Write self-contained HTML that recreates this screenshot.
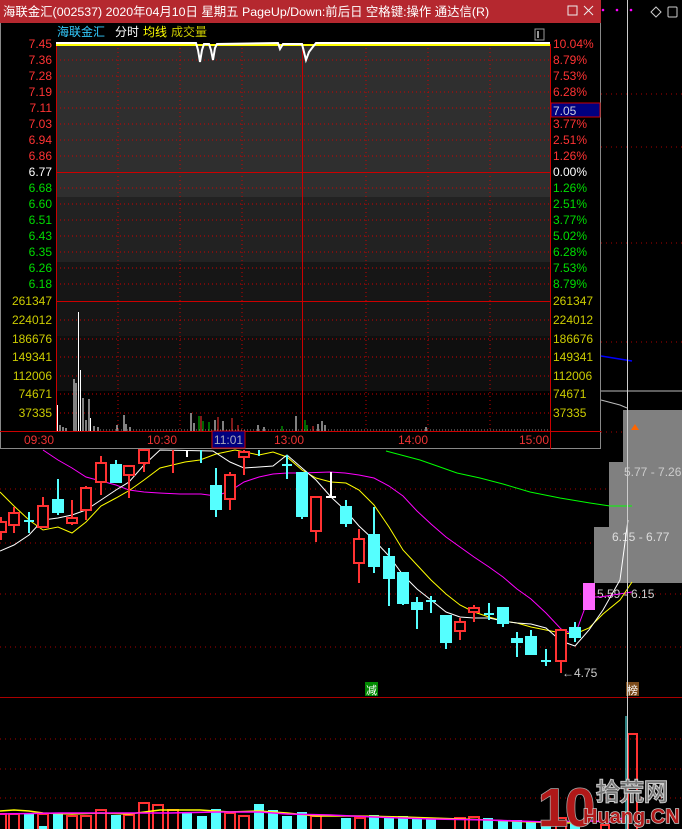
<!DOCTYPE html>
<html><head><meta charset="utf-8"><style>
html,body{margin:0;padding:0;background:#000;width:682px;height:829px;overflow:hidden}
svg{display:block}
text{font-family:"Liberation Sans","Noto Sans CJK SC",sans-serif;font-size:12px}
</style></head><body>
<svg width="682" height="829" viewBox="0 0 682 829" xmlns="http://www.w3.org/2000/svg">
<rect width="682" height="829" fill="#000"/>
<g stroke="#a00" stroke-width="1" stroke-dasharray="1,4">
<line x1="0" y1="489" x2="682" y2="489"/><line x1="0" y1="543" x2="682" y2="543"/>
<line x1="0" y1="594" x2="682" y2="594"/><line x1="0" y1="647" x2="682" y2="647"/>
<line x1="601" y1="94" x2="682" y2="94"/><line x1="601" y1="147" x2="682" y2="147"/>
<line x1="601" y1="243" x2="682" y2="243"/><line x1="601" y1="342" x2="682" y2="342"/>
<line x1="601" y1="432" x2="682" y2="432"/>
<line x1="0" y1="739" x2="682" y2="739"/><line x1="0" y1="769" x2="682" y2="769"/><line x1="0" y1="798" x2="682" y2="798"/>
</g>
<line x1="0" y1="697.5" x2="682" y2="697.5" stroke="#a00"/>
<rect x="623" y="410" width="59" height="52" fill="#808080"/>
<rect x="609" y="462" width="73" height="65" fill="#808080"/>
<rect x="594" y="527" width="88" height="56" fill="#808080"/>
<line x1="601" y1="391" x2="682" y2="391" stroke="#bbb"/>
<polyline points="601,400 620,405 627,408" fill="none" stroke="#bbb"/>
<polyline points="601,356 632,361" fill="none" stroke="#00f" stroke-width="1.5"/>
<path d="M631,430 L635,424 L639,430 Z" fill="#f60"/>
<text x="624" y="476" fill="#ccc">5.77 - 7.26</text>
<text x="612" y="541" fill="#ddd">6.15 - 6.77</text>
<text x="597" y="598" fill="#ccc">5.59 - 6.15</text>
<polyline fill="none" stroke="#0f0" stroke-width="1" points="386,451 420,460 440,467 457,473 480,478 503,484 530,492 560,498 590,503 610,506 632,506"/>
<polyline fill="none" stroke="#f0f" stroke-width="1" points="43,450 58,460 72,468 86,477 101,481 116,485 129,490 144,492 159,493 180,494 201,494 216,496 230,491 244,482 259,477 273,474 287,473 302,473 330,472 345,473 359,475 374,478 389,486 403,496 417,511 431,524 446,537 460,547 474,557 489,567 503,577 517,589 531,599 546,613 561,629 575,635 589,597 600,597 632,592"/>
<polyline fill="none" stroke="#ff0" stroke-width="1" points="0,492 14,506 29,520 43,530 58,527 72,533 86,522 101,506 116,498 130,490 144,480 160,468 185,462 200,460 216,454 235,450 259,455 273,452 287,457 302,470 316,478 331,482 346,483 359,490 374,505 389,527 403,550 417,565 431,580 446,594 460,605 474,612 489,617 503,621 517,623 531,627 546,630 561,633 575,634 589,628 603,614 620,600 632,582"/>
<polyline fill="none" stroke="#fff" stroke-width="1" points="0,551 14,545 29,535 43,520 58,518 72,515 86,510 101,500 116,490 129,482 144,465 160,450 213,451 230,462 244,468 259,467 273,466 287,455 302,468 316,480 331,497 346,511 359,526 374,540 389,556 403,575 417,589 431,600 446,612 460,617 474,618 489,618 503,621 517,623 531,624 546,628 561,641 575,646 589,630 603,610 620,580 628,520"/>
<g stroke-width="2">
<g stroke="#ff3232" fill="#000">
<line x1="1" y1="517" x2="1" y2="540"/><rect x="-4" y="522" width="10" height="10"/>
<line x1="14" y1="507" x2="14" y2="533"/><rect x="9" y="513" width="10" height="12"/>
<line x1="43" y1="497" x2="43" y2="527"/><rect x="38" y="506" width="10" height="21"/>
<line x1="72" y1="500" x2="72" y2="525"/><rect x="67" y="518" width="10" height="5"/>
<line x1="86" y1="486" x2="86" y2="520"/><rect x="81" y="488" width="10" height="22"/>
<line x1="101" y1="456" x2="101" y2="495"/><rect x="96" y="463" width="10" height="19"/>
<line x1="129" y1="466" x2="129" y2="498"/><rect x="124" y="466" width="10" height="9"/>
<line x1="144" y1="450" x2="144" y2="472"/><rect x="139" y="450" width="10" height="13"/>
<line x1="173" y1="450" x2="173" y2="473"/>
<line x1="230" y1="472" x2="230" y2="510"/><rect x="225" y="475" width="10" height="24"/>
<line x1="244" y1="450" x2="244" y2="475"/><rect x="239" y="452" width="10" height="5"/>
<line x1="316" y1="497" x2="316" y2="542"/><rect x="311" y="497" width="10" height="34"/>
<line x1="359" y1="529" x2="359" y2="583"/><rect x="354" y="539" width="10" height="24"/>
<line x1="460" y1="618" x2="460" y2="640"/><rect x="455" y="622" width="10" height="9"/>
<line x1="474" y1="605" x2="474" y2="622"/><rect x="469" y="608" width="10" height="4"/>
<line x1="561" y1="661" x2="561" y2="673"/><rect x="556" y="630" width="10" height="31"/>
</g>
<g stroke="#5ff" fill="#5ff">
<line x1="29" y1="512" x2="29" y2="533"/><line x1="24" y1="521" x2="34" y2="521"/>
<line x1="58" y1="479" x2="58" y2="515"/><rect x="53" y="500" width="10" height="12"/>
<line x1="116" y1="460" x2="116" y2="482"/><rect x="111" y="465" width="10" height="17"/>
<line x1="201" y1="450" x2="201" y2="463"/>
<line x1="216" y1="468" x2="216" y2="517"/><rect x="211" y="486" width="10" height="23"/>
<line x1="259" y1="450" x2="259" y2="456"/>
<line x1="287" y1="455" x2="287" y2="479"/><line x1="282" y1="465" x2="292" y2="465"/>
<line x1="302" y1="473" x2="302" y2="519"/><rect x="297" y="473" width="10" height="43"/>
<line x1="346" y1="500" x2="346" y2="527"/><rect x="341" y="507" width="10" height="16"/>
<line x1="374" y1="507" x2="374" y2="573"/><rect x="369" y="535" width="10" height="31"/>
<line x1="389" y1="548" x2="389" y2="606"/><rect x="384" y="557" width="10" height="21"/>
<line x1="403" y1="573" x2="403" y2="605"/><rect x="398" y="573" width="10" height="30"/>
<line x1="417" y1="597" x2="417" y2="629"/><rect x="412" y="603" width="10" height="6"/>
<line x1="431" y1="596" x2="431" y2="613"/><line x1="426" y1="601" x2="436" y2="601"/>
<line x1="446" y1="616" x2="446" y2="649"/><rect x="441" y="616" width="10" height="26"/>
<line x1="489" y1="603" x2="489" y2="620"/><line x1="484" y1="614" x2="494" y2="614"/>
<line x1="503" y1="608" x2="503" y2="627"/><rect x="498" y="608" width="10" height="15"/>
<line x1="517" y1="632" x2="517" y2="657"/><rect x="512" y="639" width="10" height="3"/>
<line x1="531" y1="630" x2="531" y2="654"/><rect x="526" y="637" width="10" height="17"/>
<line x1="546" y1="649" x2="546" y2="666"/><line x1="541" y1="661" x2="551" y2="661"/>
<line x1="575" y1="622" x2="575" y2="642"/><rect x="570" y="628" width="10" height="9"/>
</g>
<g stroke="#fff" fill="#fff">
<line x1="187" y1="450" x2="187" y2="457"/>
<line x1="331" y1="472" x2="331" y2="497"/><line x1="326" y1="497" x2="336" y2="497"/>
</g>
<rect x="583" y="583" width="12" height="27" fill="#f6f" stroke="none"/>
</g>
<text x="562" y="677" fill="#ccc">←4.75</text>
<rect x="365" y="682" width="13" height="14" fill="#080"/><text x="366" y="694" fill="#fff" style="font-size:11px">减</text>
<rect x="626" y="682" width="13" height="14" fill="#7a4a1a"/><text x="627" y="694" fill="#fff" style="font-size:11px">榜</text>
<g stroke-width="2">
<g fill="#5ff">
<rect x="24" y="814" width="10" height="15"/><rect x="53" y="813" width="10" height="16"/><rect x="111" y="815" width="10" height="14"/><rect x="182" y="813" width="10" height="16"/><rect x="197" y="816" width="10" height="13"/><rect x="211" y="809" width="10" height="20"/><rect x="254" y="804" width="10" height="25"/><rect x="268" y="810" width="10" height="19"/><rect x="282" y="816" width="10" height="13"/><rect x="297" y="812" width="10" height="17"/><rect x="341" y="818" width="10" height="11"/><rect x="369" y="815" width="10" height="14"/><rect x="384" y="816" width="10" height="13"/><rect x="398" y="816" width="10" height="13"/><rect x="412" y="819" width="10" height="10"/><rect x="426" y="818" width="10" height="11"/><rect x="483" y="818" width="10" height="11"/><rect x="498" y="821" width="10" height="8"/><rect x="512" y="820" width="10" height="9"/><rect x="526" y="822" width="10" height="7"/><rect x="541" y="822" width="10" height="7"/><rect x="570" y="820" width="10" height="9"/><rect x="39" y="826" width="10" height="3"/>
</g>
<g fill="none" stroke="#ff3232">
<rect x="-4" y="814" width="10" height="16"/><rect x="9" y="814" width="10" height="16"/><rect x="38" y="814" width="10" height="16"/><rect x="67" y="816" width="10" height="14"/><rect x="81" y="816" width="10" height="14"/><rect x="96" y="810" width="10" height="20"/><rect x="124" y="815" width="10" height="15"/><rect x="139" y="803" width="10" height="27"/><rect x="153" y="805" width="10" height="25"/><rect x="168" y="810" width="10" height="20"/><rect x="225" y="813" width="10" height="17"/><rect x="239" y="816" width="10" height="14"/><rect x="311" y="816" width="10" height="14"/><rect x="355" y="818" width="10" height="12"/><rect x="455" y="818" width="10" height="12"/><rect x="469" y="817" width="10" height="13"/><rect x="556" y="818" width="10" height="12"/><rect x="601" y="825" width="8" height="5"/>
<rect x="628" y="734" width="9" height="96"/>
</g>
<polyline fill="none" stroke="#ff0" stroke-width="1.5" points="0,811 14,810 29,811 43,813 72,814 101,813 129,814 160,810 200,810 230,812 259,811 287,813 316,816 359,816 403,817 431,818 489,820 531,822 575,823 590,822"/>
<polyline fill="none" stroke="#f0f" stroke-width="1.5" points="0,814 60,813 116,813 170,813 216,812 260,812 287,814 330,815 374,817 431,819 489,820 546,822 590,821 612,822 625,817"/>
</g>
<line x1="627.5" y1="0" x2="627.5" y2="829" stroke="#ccc"/>
<line x1="626" y1="716" x2="626" y2="829" stroke="#5ff"/>
<text x="538" y="826" fill="#b01818" stroke="#aaa" stroke-width="1.5" paint-order="stroke" style="font-size:54px;font-weight:bold;letter-spacing:-3px">10</text>
<text x="596" y="800" fill="#777" stroke="#ccc" stroke-width="2" paint-order="stroke" style="font-size:24px">拾荒网</text>
<text x="583" y="823" fill="#b01818" stroke="#ccc" stroke-width="1.5" paint-order="stroke" style="font-size:20px;font-weight:bold">Huang.CN</text>
<circle cx="603" cy="10" r="1.3" fill="#f0f"/><circle cx="617" cy="10" r="1.3" fill="#f0f"/><circle cx="631" cy="10" r="1.3" fill="#f0f"/>
<path d="M656,7 L661,12 L656,17 L651,12 Z" fill="none" stroke="#ccc"/>
<rect x="668" y="7" width="9" height="10" fill="none" stroke="#ccc" rx="1"/>
<rect x="0" y="0" width="601" height="449" fill="#000"/>
<rect x="0.5" y="0.5" width="600" height="448" fill="none" stroke="#888"/>
<rect x="0" y="0" width="601" height="23" fill="#b5282f"/>
<text x="3" y="16" fill="#fff" style="font-size:12.4px">海联金汇(002537) 2020年04月10日 星期五 PageUp/Down:前后日 空格键:操作 通达信(R)</text>
<rect x="568" y="6" width="9" height="9" fill="none" stroke="#eee"/>
<path d="M584,6 L593,15 M593,6 L584,15" stroke="#eee"/>
<rect x="56" y="44" width="494" height="153" fill="#2f2f2f"/>
<rect x="56" y="197" width="494" height="65" fill="#222"/>
<rect x="56" y="262" width="494" height="39" fill="#161616"/>
<rect x="56" y="301" width="494" height="35" fill="#161616"/>
<rect x="56" y="336" width="494" height="55" fill="#0f0f0f"/>
<rect x="535" y="29" width="9" height="11" fill="none" stroke="#999"/><rect x="537" y="31" width="2" height="7" fill="#999"/>
<text x="57" y="36" fill="#3cf">海联金汇</text><text x="115" y="36" fill="#fff">分时</text><text x="143" y="36" fill="#ff0">均线</text><text x="171" y="36" fill="#cc0">成交量</text>
<g stroke="#c00" stroke-dasharray="1,3">
<line x1="56" y1="60" x2="550" y2="60"/><line x1="56" y1="76" x2="550" y2="76"/><line x1="56" y1="92" x2="550" y2="92"/><line x1="56" y1="108" x2="550" y2="108"/><line x1="56" y1="124" x2="550" y2="124"/><line x1="56" y1="140" x2="550" y2="140"/><line x1="56" y1="156" x2="550" y2="156"/>
<line x1="56" y1="188" x2="550" y2="188"/><line x1="56" y1="204" x2="550" y2="204"/><line x1="56" y1="220" x2="550" y2="220"/><line x1="56" y1="236" x2="550" y2="236"/><line x1="56" y1="252" x2="550" y2="252"/><line x1="56" y1="268" x2="550" y2="268"/><line x1="56" y1="284" x2="550" y2="284"/>
<line x1="56" y1="320" x2="550" y2="320"/><line x1="56" y1="339" x2="550" y2="339"/><line x1="56" y1="357" x2="550" y2="357"/><line x1="56" y1="376" x2="550" y2="376"/><line x1="56" y1="394" x2="550" y2="394"/><line x1="56" y1="413" x2="550" y2="413"/>
<line x1="118" y1="44" x2="118" y2="431"/><line x1="180" y1="44" x2="180" y2="431"/><line x1="242" y1="44" x2="242" y2="431"/><line x1="366" y1="44" x2="366" y2="431"/><line x1="428" y1="44" x2="428" y2="431"/><line x1="490" y1="44" x2="490" y2="431"/>
</g>
<g stroke="#c00" stroke-width="1">
<line x1="56" y1="172.5" x2="550" y2="172.5"/><line x1="56" y1="301.5" x2="550" y2="301.5"/><line x1="0" y1="431.5" x2="601" y2="431.5"/>
<line x1="56.5" y1="44" x2="56.5" y2="431"/><line x1="302.5" y1="44" x2="302.5" y2="431"/><line x1="550.5" y1="44" x2="550.5" y2="449"/>
</g>
<polyline fill="none" stroke="#ff0" stroke-width="2" points="56,45 550,45"/>
<polyline fill="none" stroke="#fff" stroke-width="2" points="56,43 196,43 198,50 200,62 202,50 204,44 209,44 211,50 213,60 215,48 217,44 278,43 280,49 283,44 302,44 304,52 306,60 309,52 312,48 316,43 550,43"/>
<g stroke="#fff" stroke-width="1">
<line x1="57.5" y1="431" x2="57.5" y2="405"/><line x1="60" y1="431" x2="60" y2="425"/><line x1="63" y1="431" x2="63" y2="427"/><line x1="66" y1="431" x2="66" y2="428"/>
<line x1="74" y1="431" x2="74" y2="379"/><line x1="76" y1="431" x2="76" y2="383"/><line x1="78.5" y1="431" x2="78.5" y2="312"/><line x1="80.5" y1="431" x2="80.5" y2="370"/><line x1="83" y1="431" x2="83" y2="398"/><line x1="86" y1="431" x2="86" y2="420"/><line x1="89" y1="431" x2="89" y2="399"/><line x1="90.5" y1="431" x2="90.5" y2="418"/><line x1="94" y1="431" x2="94" y2="426"/><line x1="98" y1="431" x2="98" y2="427"/>
<line x1="117" y1="431" x2="117" y2="425"/><line x1="124" y1="431" x2="124" y2="415"/><line x1="126" y1="431" x2="126" y2="424"/><line x1="130" y1="431" x2="130" y2="427"/>
<line x1="191" y1="431" x2="191" y2="413"/><line x1="194" y1="431" x2="194" y2="423"/><line x1="215" y1="431" x2="215" y2="420"/><line x1="223" y1="431" x2="223" y2="421"/><line x1="258" y1="431" x2="258" y2="425"/><line x1="264" y1="431" x2="264" y2="427"/><line x1="296" y1="431" x2="296" y2="416"/><line x1="318" y1="431" x2="318" y2="424"/><line x1="322" y1="431" x2="322" y2="421"/><line x1="325" y1="431" x2="325" y2="425"/><line x1="426" y1="431" x2="426" y2="427"/>
</g>
<g stroke="#0c0"><line x1="199" y1="431" x2="199" y2="416"/><line x1="203" y1="431" x2="203" y2="421"/><line x1="209" y1="431" x2="209" y2="422"/><line x1="282" y1="431" x2="282" y2="426"/><line x1="305" y1="431" x2="305" y2="420"/><line x1="307" y1="431" x2="307" y2="425"/></g>
<g stroke="#f33"><line x1="201" y1="431" x2="201" y2="416"/><line x1="218" y1="431" x2="218" y2="417"/><line x1="232" y1="431" x2="232" y2="418"/><line x1="238" y1="431" x2="238" y2="425"/><line x1="313" y1="431" x2="313" y2="426"/></g>
<g stroke="#888" stroke-width="1"><line x1="100" y1="430" x2="550" y2="430" stroke-dasharray="1,2"/></g>
<g text-anchor="end">
<g fill="#f33"><text x="52" y="48">7.45</text><text x="52" y="64">7.36</text><text x="52" y="80">7.28</text><text x="52" y="96">7.19</text><text x="52" y="112">7.11</text><text x="52" y="128">7.03</text><text x="52" y="144">6.94</text><text x="52" y="160">6.86</text></g>
<text x="52" y="176" fill="#fff">6.77</text>
<g fill="#0d0"><text x="52" y="192">6.68</text><text x="52" y="208">6.60</text><text x="52" y="224">6.51</text><text x="52" y="240">6.43</text><text x="52" y="256">6.35</text><text x="52" y="272">6.26</text><text x="52" y="288">6.18</text></g>
<g fill="#cc0"><text x="52" y="305">261347</text><text x="52" y="324">224012</text><text x="52" y="343">186676</text><text x="52" y="361">149341</text><text x="52" y="380">112006</text><text x="52" y="398">74671</text><text x="52" y="417">37335</text></g>
</g>
<g>
<g fill="#f33"><text x="553" y="48">10.04%</text><text x="553" y="64">8.79%</text><text x="553" y="80">7.53%</text><text x="553" y="96">6.28%</text><text x="553" y="128">3.77%</text><text x="553" y="144">2.51%</text><text x="553" y="160">1.26%</text></g>
<rect x="551" y="103" width="49" height="14" fill="#000080" stroke="#c00"/><text x="553" y="115" fill="#ccd">7.05</text>
<text x="553" y="176" fill="#fff">0.00%</text>
<g fill="#0d0"><text x="553" y="192">1.26%</text><text x="553" y="208">2.51%</text><text x="553" y="224">3.77%</text><text x="553" y="240">5.02%</text><text x="553" y="256">6.28%</text><text x="553" y="272">7.53%</text><text x="553" y="288">8.79%</text></g>
<g fill="#cc0"><text x="553" y="305">261347</text><text x="553" y="324">224012</text><text x="553" y="343">186676</text><text x="553" y="361">149341</text><text x="553" y="380">112006</text><text x="553" y="398">74671</text><text x="553" y="417">37335</text></g>
</g>
<g fill="#e33" text-anchor="middle">
<text x="39" y="444">09:30</text><text x="162" y="444">10:30</text><text x="289" y="444">13:00</text><text x="413" y="444">14:00</text><text x="534" y="444">15:00</text>
</g>
<rect x="212" y="431" width="33" height="17" fill="#000080" stroke="#c00"/>
<text x="228.5" y="444" fill="#aab" text-anchor="middle">11:01</text>
</svg>
</body></html>
